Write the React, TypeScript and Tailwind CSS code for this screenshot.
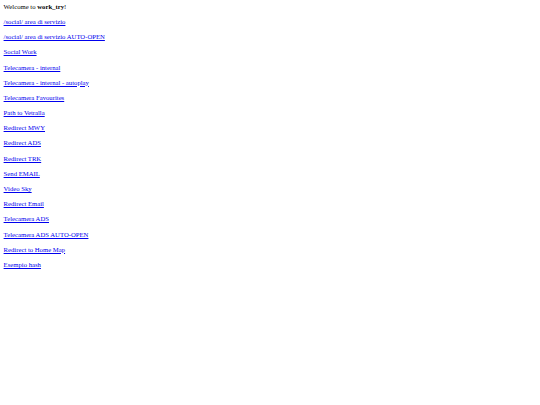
const links = [
  '/social/ area di servizio',
  '/social/ area di servizio AUTO-OPEN',
  'Social Work',
  'Telecamera - internal',
  'Telecamera - internal - autoplay',
  'Telecamera Favourites',
  'Path to Vetralla',
  'Redirect MWY',
  'Redirect ADS',
  'Redirect TRK',
  'Send EMAIL',
  'Video Sky',
  'Redirect Email',
  'Telecamera ADS',
  'Telecamera ADS AUTO-OPEN',
  'Redirect to Home Map',
  'Esempio hash',
];

export default function App() {
  return (
    <div
      className="min-h-screen w-full bg-white px-[3.6px] pt-[2.8px] text-[6.7px] leading-[8.3px] text-black"
      style={{ fontFamily: '"Liberation Serif", "Times New Roman", serif' }}
    >
      <div className="flex flex-col gap-[6.9px]">
        <div>
          Welcome to <b>work_try</b>!
        </div>
        {links.map((l) => (
          <div key={l}>
            <a href="#" className="text-[#0000ee] underline">
              {l}
            </a>
          </div>
        ))}
      </div>
    </div>
  );
}
